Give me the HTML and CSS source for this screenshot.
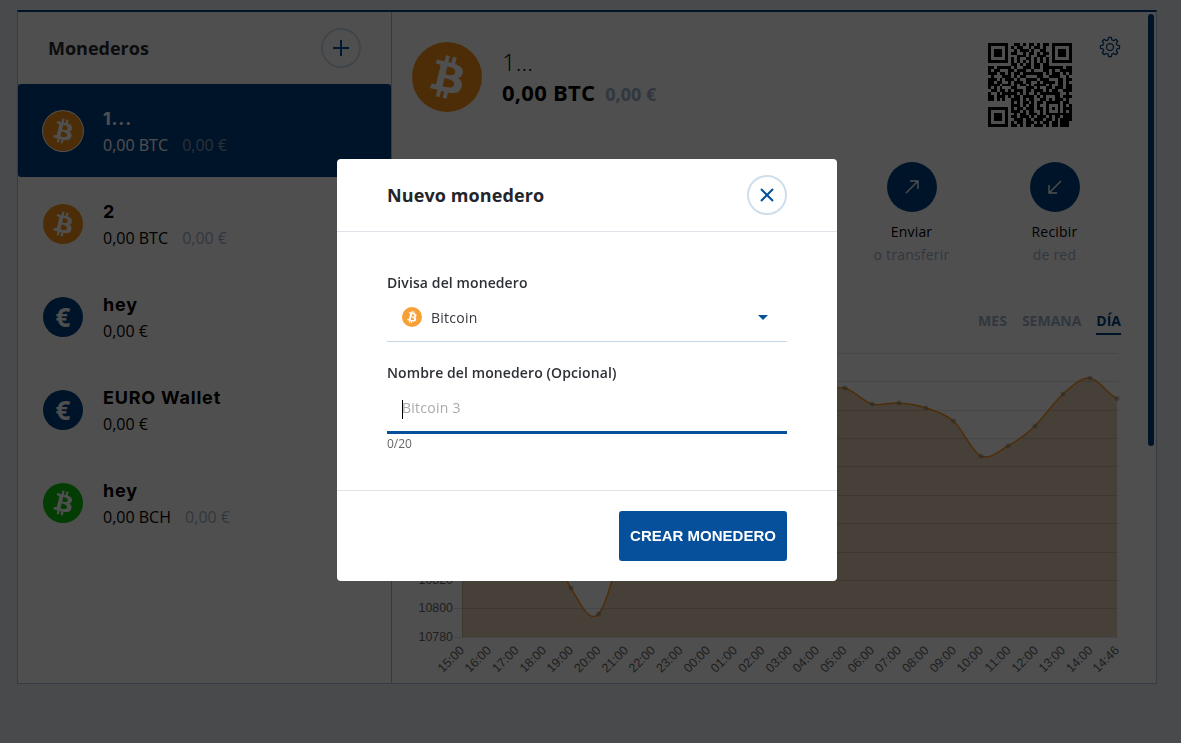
FILE: index.html
```html
<!DOCTYPE html>
<html lang="es">
<head>
    <meta charset="UTF-8">
    <meta name="viewport" content="width=device-width, initial-scale=1.0">
    <title>Monederos</title>
    <link rel="stylesheet" href="styles.css">
</head>
<body>
    <svg class="defs" aria-hidden="true">
        <symbol id="btc" viewBox="0 0 32 32">
            <path d="M23.189 14.02c.314-2.096-1.283-3.223-3.465-3.975l.708-2.84-1.728-.43-.69 2.765c-.454-.114-.92-.22-1.385-.326l.695-2.783L15.596 6l-.708 2.839c-.376-.086-.746-.17-1.104-.26l.002-.009-2.384-.595-.46 1.846s1.283.294 1.256.312c.7.175.826.638.805 1.006l-.806 3.235c.048.012.11.03.18.057l-.183-.045-1.13 4.532c-.086.212-.303.531-.793.41.018.025-1.256-.313-1.256-.313l-.858 1.978 2.25.561c.418.105.828.215 1.231.318l-.715 2.872 1.727.43.708-2.84c.472.127.93.245 1.378.357l-.706 2.828 1.728.43.715-2.866c2.948.558 5.164.333 6.097-2.333.752-2.146-.037-3.385-1.588-4.192 1.13-.26 1.98-1.003 2.207-2.538zm-3.95 5.538c-.533 2.147-4.148.986-5.32.695l.95-3.805c1.172.293 4.929.872 4.37 3.11zm.535-5.569c-.487 1.953-3.495.96-4.47.717l.86-3.45c.975.243 4.118.696 3.61 2.733z"/>
        </symbol>
    </svg>

    <div class="wallets-card">
        <aside class="wallet-list">
            <div class="list-header">
                <h2>Monederos</h2>
                <button class="round-btn add-btn" type="button">
                    <svg viewBox="0 0 20 20" width="20" height="20"><path d="M10 2v16M2 10h16"/></svg>
                </button>
            </div>

            <div class="wallet-item selected">
                <span class="coin coin-btc"><svg><use href="#btc"/></svg></span>
                <div class="wallet-info">
                    <div class="wallet-name">1...</div>
                    <div class="wallet-amount">0,00 BTC <span class="fiat">0,00 €</span></div>
                </div>
            </div>
            <div class="wallet-item">
                <span class="coin coin-btc"><svg><use href="#btc"/></svg></span>
                <div class="wallet-info">
                    <div class="wallet-name">2</div>
                    <div class="wallet-amount">0,00 BTC <span class="fiat">0,00 €</span></div>
                </div>
            </div>
            <div class="wallet-item">
                <span class="coin coin-eur">€</span>
                <div class="wallet-info">
                    <div class="wallet-name">hey</div>
                    <div class="wallet-amount">0,00 €</div>
                </div>
            </div>
            <div class="wallet-item">
                <span class="coin coin-eur">€</span>
                <div class="wallet-info">
                    <div class="wallet-name">EURO Wallet</div>
                    <div class="wallet-amount">0,00 €</div>
                </div>
            </div>
            <div class="wallet-item">
                <span class="coin coin-bch"><svg><use href="#btc"/></svg></span>
                <div class="wallet-info">
                    <div class="wallet-name">hey</div>
                    <div class="wallet-amount">0,00 BCH <span class="fiat">0,00 €</span></div>
                </div>
            </div>
        </aside>

        <main class="wallet-detail">
            <div class="detail-header">
                <span class="coin coin-btc coin-large"><svg><use href="#btc"/></svg></span>
                <div class="detail-info">
                    <div class="detail-name">1...</div>
                    <div class="detail-amount">0,00 BTC <span class="fiat">0,00 €</span></div>
                </div>
                <svg id="qr" class="qr" viewBox="0 0 29 29" width="84" height="84"></svg>
                <svg class="gear" viewBox="-12 -12 24 24" width="22" height="22">
                    <polygon points="-2,-7.75 -1.46,-10.4 1.46,-10.4 2,-7.75 4.07,-6.89 6.32,-8.39 8.39,-6.32 6.89,-4.07 7.75,-2 10.4,-1.46 10.4,1.46 7.75,2 6.89,4.07 8.39,6.32 6.32,8.39 4.07,6.89 2,7.75 1.46,10.4 -1.46,10.4 -2,7.75 -4.07,6.89 -6.32,8.39 -8.39,6.32 -6.89,4.07 -7.75,2 -10.4,1.46 -10.4,-1.46 -7.75,-2 -6.89,-4.07 -8.39,-6.32 -6.32,-8.39 -4.07,-6.89"/>
                    <circle r="3.8"/>
                </svg>
            </div>

            <div class="actions">
                <div class="action">
                    <span class="action-circle">
                        <svg viewBox="0 0 16 16" width="16" height="16"><path d="M2 14L14 2M6 2h8v8"/></svg>
                    </span>
                    <div class="action-title">Enviar</div>
                    <div class="action-sub">o transferir</div>
                </div>
                <div class="action">
                    <span class="action-circle">
                        <svg viewBox="0 0 16 16" width="16" height="16"><path d="M14 2L2 14M10 14H2V6"/></svg>
                    </span>
                    <div class="action-title">Recibir</div>
                    <div class="action-sub">de red</div>
                </div>
            </div>

            <div class="range-tabs">
                <span class="range-tab">MES</span>
                <span class="range-tab">SEMANA</span>
                <span class="range-tab active">DÍA</span>
            </div>

            <!-- viewBox starts at the panel's page position, so x/y below read as screen pixels -->
            <svg class="chart" viewBox="392 340 755 344" width="755" height="344">
                <path class="area" d="M462 500C471 493 480 480 489 480C498 480 508 493 517 500C526 507 535 505 544 520C553 535 562 576 571 588C580 603.5 589 623.6 598.5 614C607.5 604.4 617 560 626 530C635 500 644 478 653 470C662 462 671 456 680 450C689 444 699 434 708 430C717 426 726 423 735 420C744 417 753 413 762 410C771 407 781 403 790 400C799 397 808 393 817 391C826 389 836 387 845 388C854 390.3 863 401.5 872 404C881 406.5 890 402.3 899 403C908 403.7 917 405 926 408C935 411 944 413 953.5 421C962.5 429 972 452 981 456C990 460 999 451 1008 446C1017 441 1026 435 1035 426C1044 417 1054 402 1063 394C1072 386 1081 377 1090 378C1099 379 1108 395 1117 398.5V637H462Z"/>
                <g class="grid">
                    <path d="M454 353.5H1118M454 381.5H1118M454 410.5H1118M454 438.5H1118M454 466.5H1118M454 495.5H1118M454 523.5H1118M454 552.5H1118M454 580.5H1118M454 608.5H1118M454 637.5H1118"/>
                    <path d="M462.5 353V637"/>
                </g>
                <path class="line" d="M462 500C471 493 480 480 489 480C498 480 508 493 517 500C526 507 535 505 544 520C553 535 562 576 571 588C580 603.5 589 623.6 598.5 614C607.5 604.4 617 560 626 530C635 500 644 478 653 470C662 462 671 456 680 450C689 444 699 434 708 430C717 426 726 423 735 420C744 417 753 413 762 410C771 407 781 403 790 400C799 397 808 393 817 391C826 389 836 387 845 388C854 390.3 863 401.5 872 404C881 406.5 890 402.3 899 403C908 403.7 917 405 926 408C935 411 944 413 953.5 421C962.5 429 972 452 981 456C990 460 999 451 1008 446C1017 441 1026 435 1035 426C1044 417 1054 402 1063 394C1072 386 1081 377 1090 378C1099 379 1108 395 1117 398.5"/>
                <g class="points">
                    <circle cx="571" cy="588" r="2.5"/><circle cx="598.5" cy="614" r="2.5"/>
                    <circle cx="845" cy="388" r="2.5"/><circle cx="872" cy="404" r="2.5"/>
                    <circle cx="899" cy="403" r="2.5"/><circle cx="926" cy="408" r="2.5"/>
                    <circle cx="953.5" cy="421" r="2.5"/><circle cx="981" cy="456" r="2.5"/>
                    <circle cx="1008" cy="446" r="2.5"/><circle cx="1035" cy="426" r="2.5"/>
                    <circle cx="1063" cy="394" r="2.5"/><circle cx="1090" cy="378" r="2.5"/>
                    <circle cx="1117" cy="398.5" r="2.5"/>
                </g>
                <g class="y-labels">
                    <text x="453" y="584">10820</text>
                    <text x="453" y="612">10800</text>
                    <text x="453" y="641">10780</text>
                </g>
                <g class="x-labels">
                    <text transform="translate(465 651) rotate(-45)">15:00</text>
                    <text transform="translate(492 651) rotate(-45)">16:00</text>
                    <text transform="translate(519.5 651) rotate(-45)">17:00</text>
                    <text transform="translate(547 651) rotate(-45)">18:00</text>
                    <text transform="translate(574 651) rotate(-45)">19:00</text>
                    <text transform="translate(601.5 651) rotate(-45)">20:00</text>
                    <text transform="translate(629 651) rotate(-45)">21:00</text>
                    <text transform="translate(656 651) rotate(-45)">22:00</text>
                    <text transform="translate(683.5 651) rotate(-45)">23:00</text>
                    <text transform="translate(711 651) rotate(-45)">00:00</text>
                    <text transform="translate(738 651) rotate(-45)">01:00</text>
                    <text transform="translate(765.5 651) rotate(-45)">02:00</text>
                    <text transform="translate(793 651) rotate(-45)">03:00</text>
                    <text transform="translate(820 651) rotate(-45)">04:00</text>
                    <text transform="translate(847.5 651) rotate(-45)">05:00</text>
                    <text transform="translate(875 651) rotate(-45)">06:00</text>
                    <text transform="translate(902 651) rotate(-45)">07:00</text>
                    <text transform="translate(929.5 651) rotate(-45)">08:00</text>
                    <text transform="translate(957 651) rotate(-45)">09:00</text>
                    <text transform="translate(984 651) rotate(-45)">10:00</text>
                    <text transform="translate(1011.5 651) rotate(-45)">11:00</text>
                    <text transform="translate(1039 651) rotate(-45)">12:00</text>
                    <text transform="translate(1066 651) rotate(-45)">13:00</text>
                    <text transform="translate(1093.5 651) rotate(-45)">14:00</text>
                    <text transform="translate(1120 651) rotate(-45)">14:46</text>
                </g>
            </svg>

            <div class="scroll-thumb"></div>
        </main>
    </div>

    <div class="overlay">
        <div class="modal">
            <div class="modal-header">
                <h3>Nuevo monedero</h3>
                <button class="round-btn close-btn" type="button">
                    <svg viewBox="0 0 14 14" width="14" height="14"><path d="M1 1l12 12M13 1L1 13"/></svg>
                </button>
            </div>
            <div class="modal-body">
                <div class="field-label">Divisa del monedero</div>
                <div class="select-row">
                    <span class="coin coin-btc coin-small"><svg><use href="#btc"/></svg></span>
                    <span class="select-value">Bitcoin</span>
                    <span class="select-caret"></span>
                </div>
                <label class="field-label name-label" for="walletName">Nombre del monedero (Opcional)</label>
                <div class="name-field">
                    <input class="name-input" id="walletName" type="text" placeholder="Bitcoin 3" maxlength="20">
                    <span class="text-caret"></span>
                </div>
                <div class="char-count">0/20</div>
            </div>
            <div class="modal-footer">
                <button class="create-btn" type="button">CREAR MONEDERO</button>
            </div>
        </div>
    </div>

    <script src="app.js"></script>
</body>
</html>
```

FILE: styles.css
```css
* {
    box-sizing: border-box;
}

body {
    font-family: "Open Sans", sans-serif;
    font-size: 14px;
    color: #000000;
    background-color: #e8edf5;
    height: 743px;
    margin: 0;
    padding: 10px 24px 0 17px;
    overflow: hidden;
}

h2, h3 {
    margin: 0;
}

.defs {
    display: none;
}

.wallets-card {
    display: flex;
    height: 674px;
    background-color: #ffffff;
    border: 1px solid #a9bdd5;
    border-top: 2px solid #034284;
}

/* left column */
.wallet-list {
    width: 374px;
    flex-shrink: 0;
    border-right: 1px solid #a9bdd5;
}

.list-header {
    display: flex;
    align-items: center;
    justify-content: space-between;
    height: 72px;
    padding: 0 30px 0 30px;
}

.list-header h2 {
    font-size: 18px;
    font-weight: 700;
    color: #2b2b33;
}

.round-btn {
    display: flex;
    align-items: center;
    justify-content: center;
    width: 40px;
    height: 40px;
    padding: 0;
    background: none;
    border: 2px solid #cfdeec;
    border-radius: 50%;
}

.round-btn svg path {
    fill: none;
    stroke: #054f9b;
    stroke-width: 2;
}

.wallet-item {
    display: flex;
    align-items: center;
    gap: 20px;
    height: 93px;
    padding-left: 25px;
}

.wallet-item.selected {
    background-color: #034284;
    color: #ffffff;
    border-radius: 3px;
}

.wallet-item.selected .coin {
    box-shadow: 0 0 0 1px #ffffff;
}

.wallet-item.selected .fiat {
    color: #8a9db5;
}

.coin {
    display: flex;
    align-items: center;
    justify-content: center;
    flex-shrink: 0;
    width: 40px;
    height: 40px;
    border-radius: 50%;
    color: #ffffff;
    font-size: 26px;
    font-weight: 700;
}

.coin svg {
    width: 100%;
    height: 100%;
    fill: #ffffff;
}

.coin-btc {
    background-color: #f7931a;
}

.coin-eur {
    background-color: #034284;
}

.coin-bch {
    background-color: #0ac40a;
}

.coin-large {
    width: 70px;
    height: 70px;
}

.coin-small {
    width: 20px;
    height: 20px;
    background-color: #f7a035;
}

.wallet-info {
    padding-top: 2px;
}

.wallet-name {
    font-family: "Inter", sans-serif;
    font-size: 18px;
    font-weight: 700;
    letter-spacing: 0.8px;
    line-height: 22px;
    margin-bottom: 4px;
}

.wallet-amount {
    font-size: 16px;
    line-height: 22px;
}

.fiat {
    color: #9fb2cc;
    margin-left: 10px;
}

/* right column */
.wallet-detail {
    position: relative;
    flex: 1;
    padding-top: 30px;
}

.detail-header {
    display: flex;
    align-items: flex-start;
    height: 85px;
    padding-left: 20px;
}

.detail-info {
    flex: 1;
    padding: 4px 0 0 20px;
}

.detail-name {
    font-size: 24px;
    font-weight: 300;
    line-height: 31px;
}

.detail-amount {
    font-size: 22px;
    font-weight: 700;
    letter-spacing: 0.25px;
    line-height: 30px;
}

.detail-amount .fiat {
    font-size: 18px;
    margin-left: 4px;
    letter-spacing: 0;
}

.qr {
    margin-top: 1px;
    fill: #000000;
    shape-rendering: crispEdges;
}

.gear {
    margin: -6px 35px 0 27px;
    fill: none;
    stroke: #034284;
    stroke-width: 1.4;
    stroke-linejoin: round;
}

.actions {
    display: flex;
    justify-content: flex-end;
    margin-top: 35px;
    padding-right: 30px;
}

.action {
    width: 143px;
    text-align: center;
    letter-spacing: 0.2px;
}

.action-circle {
    display: flex;
    align-items: center;
    justify-content: center;
    width: 50px;
    height: 50px;
    margin: 0 auto;
    background-color: #034284;
    border-radius: 50%;
}

.action-circle path {
    fill: none;
    stroke: #ffffff;
    stroke-width: 1.4;
}

.action-title {
    margin-top: 10px;
    line-height: 20px;
}

.action-sub {
    margin-top: 3px;
    line-height: 20px;
    color: #9fb2cc;
}

.range-tabs {
    display: flex;
    justify-content: flex-end;
    gap: 15px;
    margin-top: 46px;
    padding-right: 35px;
}

.range-tab {
    font-weight: 700;
    line-height: 20px;
    padding-bottom: 2px;
    border-bottom: 2px solid transparent;
    color: #9fb2cc;
}

.range-tab.active {
    color: #034284;
    border-bottom-color: #034284;
}

.chart {
    display: block;
    margin-top: 5px;
}

.chart .area {
    fill: #e6cfb4;
}

.chart .grid path {
    fill: none;
    stroke: rgba(0, 0, 0, 0.12);
    stroke-width: 1;
}

.chart .line {
    fill: none;
    stroke: #f7931a;
    stroke-width: 1.5;
}

.chart .points circle {
    fill: rgba(120, 120, 120, 0.45);
}

.chart text {
    font-family: "Liberation Sans", sans-serif;
    font-size: 12.4px;
    fill: #666666;
}

.chart .x-labels text {
    font-size: 12.6px;
}

.y-labels text, .x-labels text {
    text-anchor: end;
}

.scroll-thumb {
    position: absolute;
    top: 2px;
    right: 2px;
    width: 6px;
    height: 432px;
    background-color: #034284;
    border-radius: 3px;
}

/* modal */
.overlay {
    position: fixed;
    top: 0;
    left: 0;
    width: 100%;
    height: 100%;
    display: flex;
    align-items: flex-start;
    justify-content: center;
    padding: 159px 7px 0 0;
    background-color: rgba(0, 0, 0, 0.69);
}

.modal {
    width: 500px;
    height: 422px;
    display: flex;
    flex-direction: column;
    background-color: #ffffff;
    border-radius: 4px;
}

.modal-header {
    display: flex;
    align-items: center;
    justify-content: space-between;
    height: 73px;
    padding: 0 50px;
    border-bottom: 1px solid #dfe3ea;
}

.modal-header h3 {
    font-size: 18px;
    font-weight: 700;
    letter-spacing: 0.1px;
    color: #23252b;
}

.modal-body {
    flex: 1;
    padding: 40px 50px 0;
}

.field-label {
    display: block;
    font-weight: 600;
    letter-spacing: 0.1px;
    line-height: 22px;
    color: #2d3036;
}

.select-row {
    display: flex;
    align-items: center;
    gap: 9px;
    height: 47px;
    padding: 0 19px 2px 15px;
    margin-top: 1px;
    border-bottom: 1px solid #c5d5e5;
}

.select-value {
    flex: 1;
    letter-spacing: 0.25px;
    color: #33363c;
}

.select-caret {
    width: 0;
    height: 0;
    border-left: 5.5px solid transparent;
    border-right: 5.5px solid transparent;
    border-top: 5px solid #054f9b;
}

.name-label {
    margin-top: 20px;
}

.name-field {
    position: relative;
    margin-top: 2px;
}

.name-input {
    display: block;
    width: 100%;
    height: 48px;
    padding: 0 15px 3px;
    font-family: "Open Sans", sans-serif;
    font-size: 14px;
    letter-spacing: 0.25px;
    color: #33363c;
    border: none;
    border-bottom: 3px solid #054f9b;
    border-radius: 0;
    outline: none;
}

.name-input::placeholder {
    color: #aaaaaa;
}

.text-caret {
    position: absolute;
    top: 14px;
    left: 15px;
    width: 1px;
    height: 19px;
    background-color: #000000;
}

.char-count {
    margin-top: 2px;
    font-size: 12px;
    line-height: 16px;
    color: #666666;
}

.modal-footer {
    display: flex;
    justify-content: flex-end;
    height: 91px;
    padding: 20px 50px;
    border-top: 1px solid #dfe3ea;
}

.create-btn {
    width: 168px;
    height: 50px;
    padding: 0 0 2px;
    font-family: "Liberation Sans", sans-serif;
    font-size: 15px;
    font-weight: 700;
    color: #ffffff;
    background-color: #054f9b;
    border: none;
    border-radius: 3px;
}
```

FILE: app.js
```js
// QR modules, one string per row
var rows = [
    "#######..##.#.##.#.##.#######",
    "#.....#.#.##..#.##.#..#.....#",
    "#.###.#..#.###.#..##..#.###.#",
    "#.###.#.##..#.##.#.##.#.###.#",
    "#.###.#...###.#..###..#.###.#",
    "#.....#.#.#..##.#.#.#.#.....#",
    "#######.#.#.#.#.#.#.#.#######",
    "........##.#.##.##.##........",
    "##.#####.#..###.##.#######.##",
    "#.##...##.###..#...##.#..####",
    "###.##.#.##.#######.#.###.#.#",
    ".#...###.#.##....##..####..#.",
    "###.#.###.#..####.###...##.##",
    "##.##..#.###.##..#.####.##.#.",
    "####.###.#.##.#.####.#..##.##",
    "#.#.#...##...###.#..##.###.##",
    ".##.##.#.###.##.###.#.##..###",
    "#..#.#####.#.#..#.#######..#.",
    "##.###.#.##.####.#.#...##.###",
    "##.#.#..###.#.##..##.#.###.#.",
    "........#.#.##.#.##.#####.##.",
    "........###.#.##.#..#...#.#.#",
    "#######.#.##.###.##.#.#.#.###",
    "#.....#.###.#.##..#.#...#.#.#",
    "#.###.#..#.##.###.#.#########",
    "#.###.#.##.###.#.###.#.##.###",
    "#.###.#..###.##.###.##.#.####",
    "#.....#.#.##.###.#.##.##.###.",
    "#######.##.#.##.###.#.##.###."
];

function drawQr() {
    var d = '';
    rows.forEach(function (row, y) {
        for (var x = 0; x < row.length; x++) {
            if (row[x] === '#') {
                d += 'M' + x + ' ' + y + 'h1v1h-1z';
            }
        }
    });
    var path = document.createElementNS('http://www.w3.org/2000/svg', 'path');
    path.setAttribute('d', d);
    document.getElementById('qr').appendChild(path);
}

drawQr();
```
